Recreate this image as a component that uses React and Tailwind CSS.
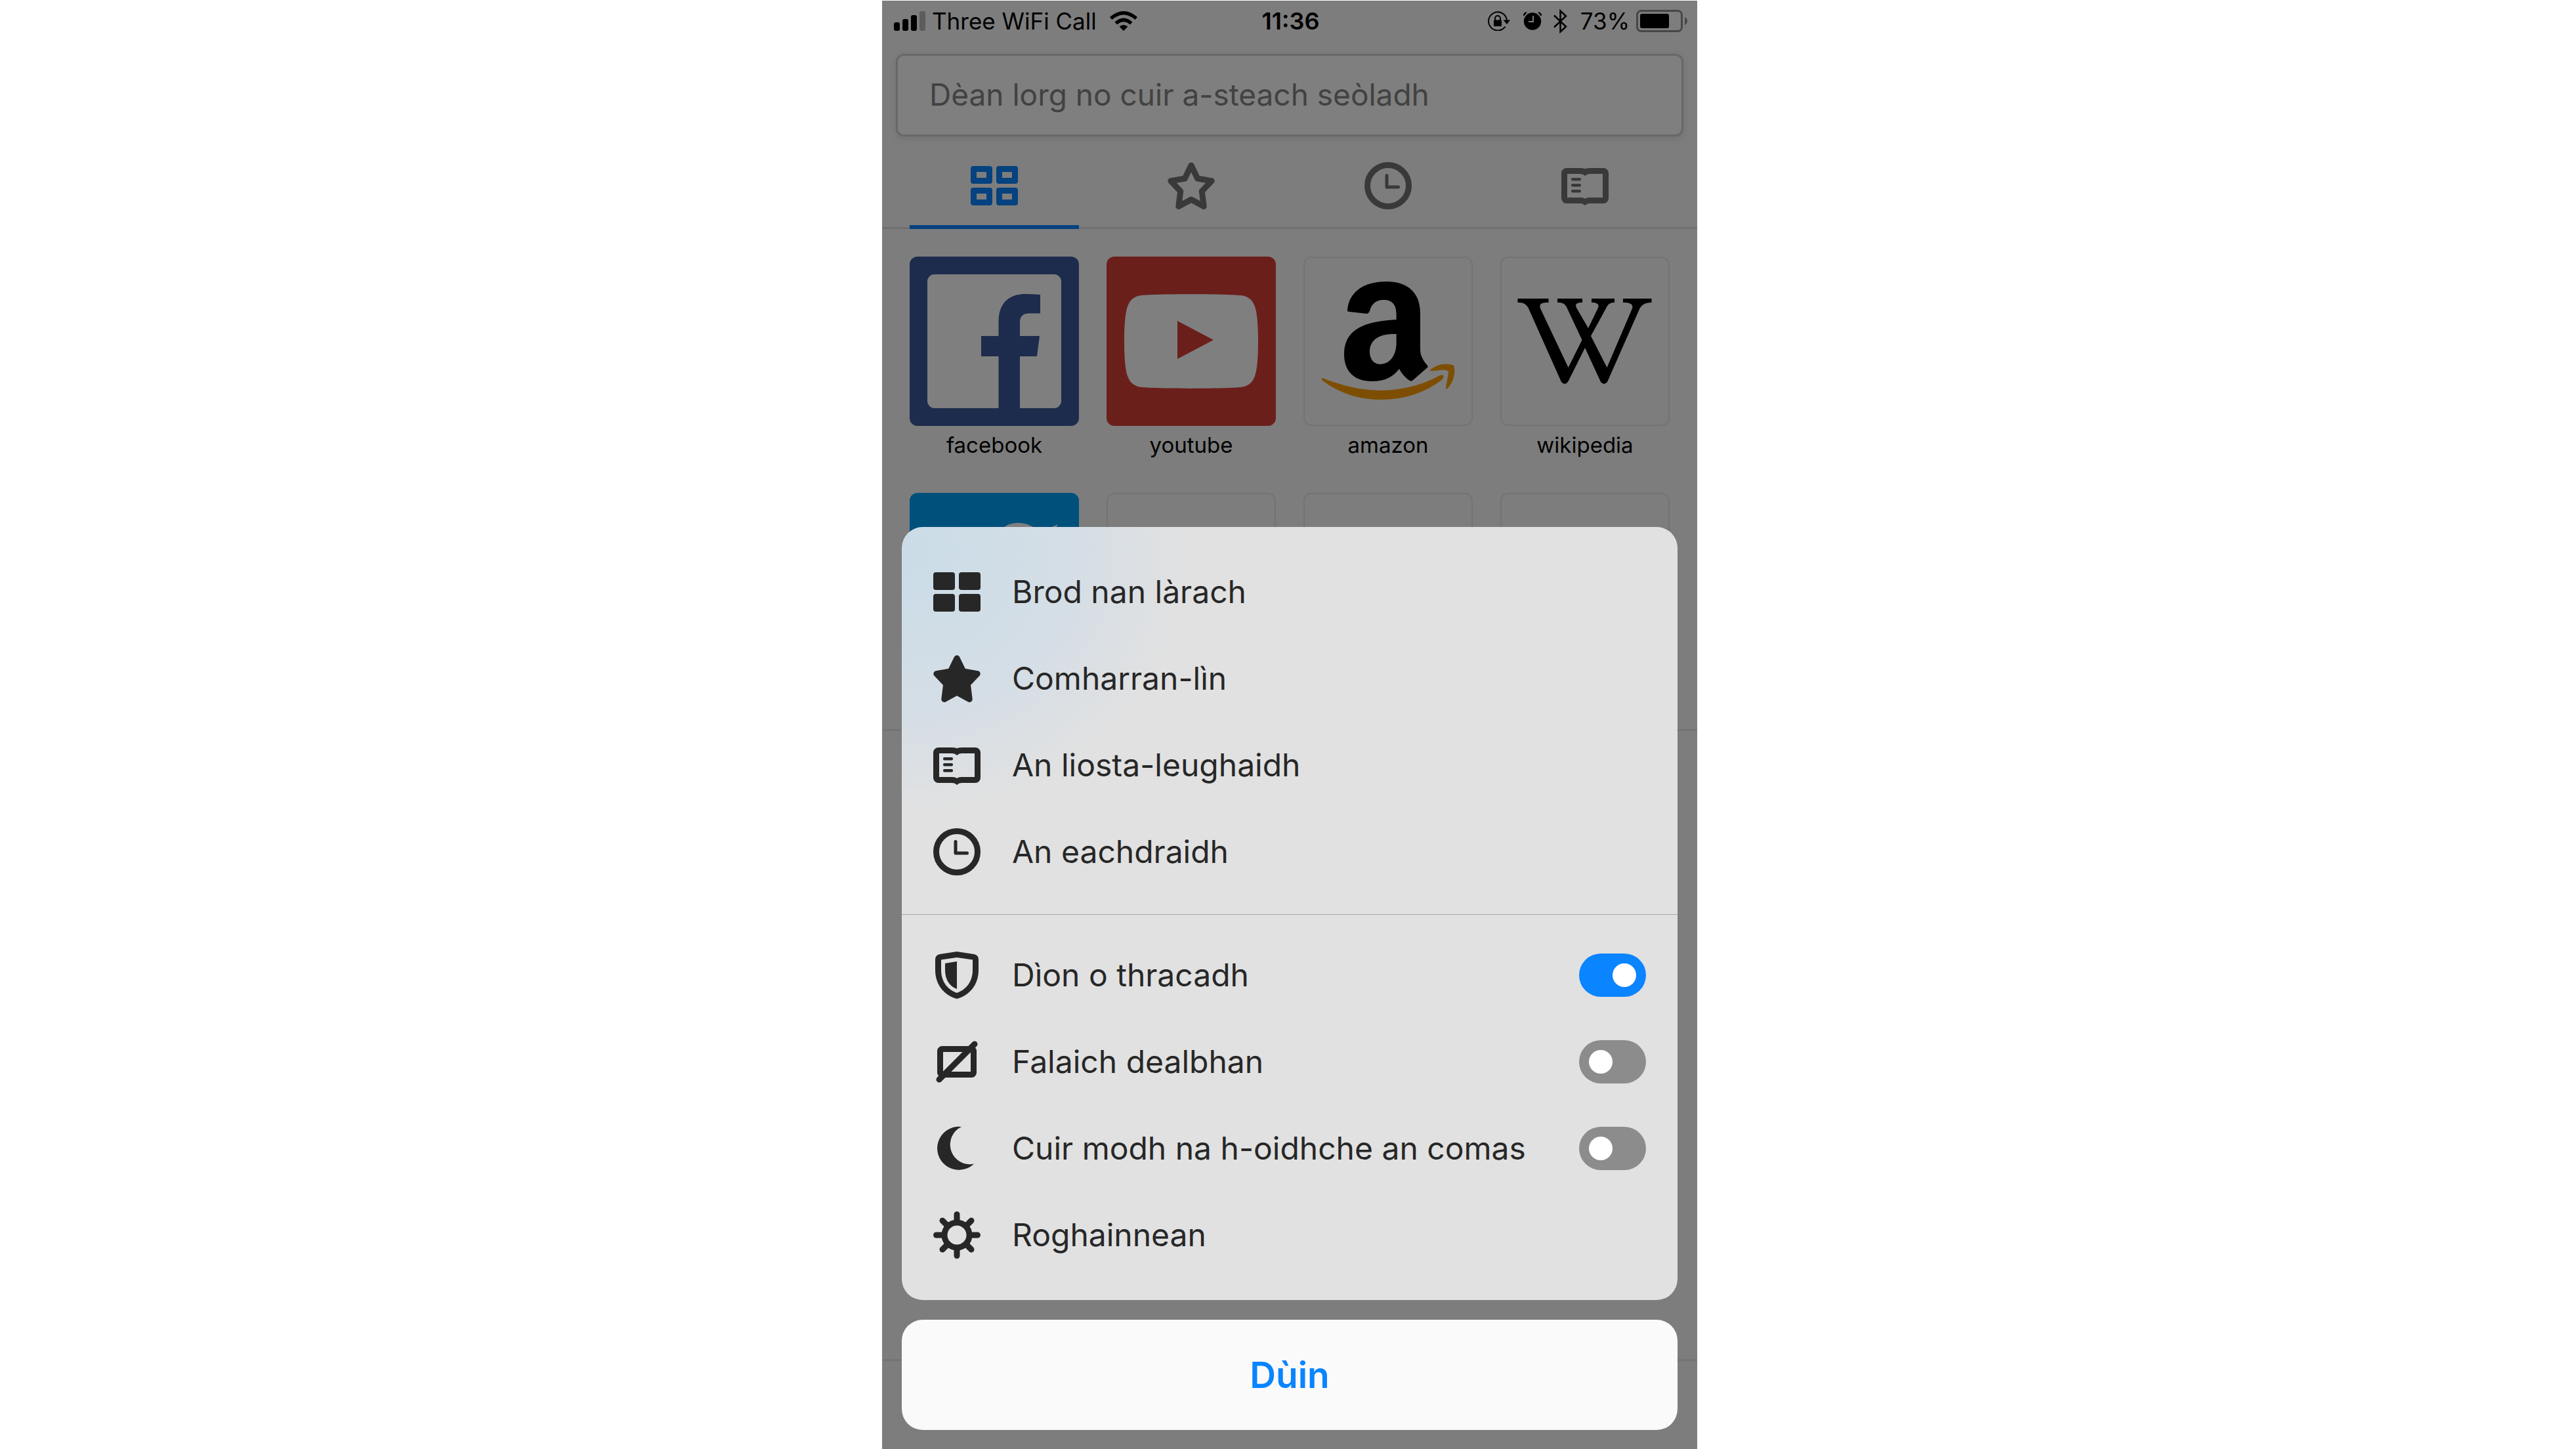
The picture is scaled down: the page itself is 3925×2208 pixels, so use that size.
import React from "react";

const GridOutline = () => (
  <svg viewBox="0 0 72 72" className="size-[72px]" fill="none" stroke="currentColor" aria-hidden="true">
    {[[0, 6], [39, 6], [0, 39], [39, 39]].map(([x, y]) => (
      <path
        key={`${x}-${y}`}
        fill="currentColor"
        stroke="none"
        fillRule="evenodd"
        transform={`translate(${x} ${y})`}
        d="M4 0H29a4 4 0 0 1 4 4V23a4 4 0 0 1-4 4H4a4 4 0 0 1-4-4V4a4 4 0 0 1 4-4ZM9 9V18H24V9Z"
      />
    ))}
  </svg>
);

const GridSolid = () => (
  <svg viewBox="0 0 72 72" className="size-[72px]" fill="currentColor" aria-hidden="true">
    <rect x="0" y="6" width="33" height="27" rx="4" />
    <rect x="39" y="6" width="33" height="27" rx="4" />
    <rect x="0" y="39" width="33" height="27" rx="4" />
    <rect x="39" y="39" width="33" height="27" rx="4" />
  </svg>
);

const STAR = "M36 5L45.7 25L67.2 28.7L52.3 44.3L55.2 67.5L36 57L16.8 67.5L19.7 44.3L4.8 28.7L26.3 25Z";

const Star = ({ solid }) => (
  <svg
    viewBox="0 0 72 72"
    className="size-[72px]"
    fill={solid ? "currentColor" : "none"}
    stroke="currentColor"
    strokeWidth="9"
    strokeLinejoin="round"
    aria-hidden="true"
  >
    <path d={STAR} />
  </svg>
);

const Clock = () => (
  <svg viewBox="0 0 72 72" className="size-[72px]" fill="none" stroke="currentColor" aria-hidden="true">
    <circle cx="36" cy="36" r="31.5" strokeWidth="9" />
    <path d="M34 20.5V38H51.5" strokeWidth="5" strokeLinecap="round" strokeLinejoin="round" />
  </svg>
);

const Book = () => (
  <svg viewBox="0 0 72 72" className="size-[72px]" fill="currentColor" aria-hidden="true">
    <g transform="translate(0 9)">
      <path
        fillRule="evenodd"
        d="M8 0H29Q34 0 36 1.500Q38 0 43 0H64A8 8 0 0 1 72 8V46A8 8 0 0 1 64 54H43Q39 54 36 57Q33 54 29 54H8A8 8 0 0 1 0 46V8A8 8 0 0 1 8 0ZM9 9V45H29Q34 45 36 47Q38 45 43 45H63V9H43Q39 9 36 12Q33 9 29 9Z"
      />
      <rect x="15" y="15" width="15" height="4.500" rx="2" />
      <rect x="15" y="24" width="15" height="4.500" rx="2" />
      <rect x="15" y="33" width="15" height="4.500" rx="2" />
    </g>
  </svg>
);

const Shield = () => (
  <svg viewBox="0 0 72 72" className="size-[72px]" fill="currentColor" aria-hidden="true">
    <path
      fillRule="evenodd"
      d="M36 0L62 4Q69 5.500 69 12V28C69 52 54 67 36 72C18 67 3 52 3 28V12Q3 5.500 10 4ZM36 9L12 12.500V28C12 46 22 58 36 63C50 58 60 46 60 28V12.500Z"
    />
    <path d="M36 15V57C25 53 18 43 18 28V18Z" />
  </svg>
);

const ImageOff = () => (
  <svg viewBox="0 0 72 72" className="size-[72px]" fill="none" stroke="currentColor" strokeWidth="9" aria-hidden="true">
    <rect x="10.500" y="16.500" width="51" height="39" rx="3" />
    <path d="M9 63L63 9" strokeLinecap="round" />
  </svg>
);

const Moon = () => (
  <svg viewBox="0 0 72 72" className="size-[72px]" fill="currentColor" aria-hidden="true">
    <path d="M43 3A33 33 0 1 0 62 59.500A30 30 0 0 1 43 3Z" />
  </svg>
);

const Gear = () => (
  <svg viewBox="0 0 72 72" className="size-[72px]" fill="none" stroke="currentColor" strokeWidth="9" strokeLinecap="round" aria-hidden="true">
    <circle cx="36" cy="36" r="19" />
    <path d="M36 4.500V16M36 56V67.500M4.500 36H16M56 36H67.500M14 14L21 21M51 51L58 58M14 58L21 51M51 21L58 14" />
  </svg>
);

const Signal = () => (
  <svg viewBox="0 0 48 30" className="h-[30px] w-12" aria-hidden="true">
    <rect x="0" y="17" width="9" height="13" rx="3" />
    <rect x="13" y="12" width="9" height="18" rx="3" />
    <rect x="26" y="6" width="9" height="24" rx="3" />
    <rect x="39" y="0" width="9" height="30" rx="3" fill="#b9b9b9" />
  </svg>
);

const Wifi = () => (
  <svg viewBox="0 0 42 30" className="h-[30px] w-[42px]" aria-hidden="true">
    <path d="M21 30L14.500 23.500Q21 18.500 27.500 23.500Z" />
    <path d="M7.500 16.500Q21 4.500 34.500 16.500L31 20.500Q21 12 11 20.500Z" />
    <path d="M0 9Q21 -9 42 9L38.500 13Q21 -2 3.500 13Z" />
  </svg>
);

const RotationLock = () => (
  <svg viewBox="0 0 34 30" className="h-[30px] w-[34px]" aria-hidden="true">
    <path d="M26.500 23.500A14 14 0 1 1 29 14" fill="none" stroke="#000" strokeWidth="2" />
    <path d="M23.500 13.500H34L29 20Z" />
    <rect x="9" y="13.500" width="12" height="9.500" rx="1" />
    <path d="M11 14V11a4 4 0 0 1 8 0V14" fill="none" stroke="#000" strokeWidth="2" />
  </svg>
);

const Alarm = () => (
  <svg viewBox="0 0 28 28" className="size-7" aria-hidden="true">
    <circle cx="14" cy="14.500" r="13.200" />
    <path d="M15 6V15H8" fill="none" stroke="#fafafa" strokeWidth="2" />
    <path d="M0 6Q0 0 6 0.500L1 6.500ZM28 6Q28 0 22 0.500L27 6.500Z" />
  </svg>
);

const Bluetooth = () => (
  <svg viewBox="0 0 21 37" className="h-[37px] w-[21px]" fill="none" stroke="#000" strokeWidth="2.500" aria-hidden="true">
    <path d="M1 9.500L19 26.500L10.500 34.500V2.500L19 10.500L1 27.500" />
  </svg>
);

const Battery = () => (
  <svg viewBox="0 0 78 34" className="h-[34px] w-[78px]" aria-hidden="true">
    <rect x="1.500" y="1.500" width="68" height="31" rx="6" fill="none" stroke="#8e8e8e" strokeWidth="3" />
    <rect x="6" y="6" width="44" height="22" rx="3" />
    <path d="M74 11Q78 13 78 17Q78 21 74 23Z" fill="#8e8e8e" />
  </svg>
);

const FacebookLogo = () => (
  <svg viewBox="0 0 258 258" className="size-full" aria-hidden="true">
    <rect width="258" height="258" fill="#3b5998" />
    <rect x="27" y="27" width="204" height="204" rx="11" fill="#fff" />
    <path
      fill="#3b5998"
      d="M135.500 231V152H109V121H135.500V98C135.500 72 151 57 176 57C188 57 195 58 199 58V86.500H183C171 86.500 168 92 168 101V121H198L194 152H168V231Z"
    />
  </svg>
);

const YoutubeLogo = () => (
  <svg viewBox="0 0 258 258" className="size-full" aria-hidden="true">
    <rect width="258" height="258" fill="#d73f37" />
    <path
      fill="#fff"
      d="M27 129C27 104 28.500 86 32 76C36 65 43 60 54 59C80 56.500 178 56.500 204 59C215 60 222 65 226 76C229.500 86 231 104 231 129C231 154 229.500 172 226 182C222 193 215 198 204 199C178 201.500 80 201.500 54 199C43 198 36 193 32 182C28.500 172 27 154 27 129Z"
    />
    <path fill="#d73f37" d="M108 98L163 127L108 156Z" />
  </svg>
);

const AmazonLogo = () => (
  <svg viewBox="0 0 258 258" className="size-full" aria-hidden="true">
    <path
      fillRule="evenodd"
      d="M67 82C69 54 92 38 126 38C160 38 178 56 178 86V142C178 152 184 160 189 166Q190 168 189 169L166 189Q164 190 162 189C156 185 150 179 146 171C137 183 125 190 104 190C78 190 62 175 62 149C62 116 84 99 141.600 96V88C141.600 74 136 66 122 66C109 66 103 74 101 83Q99 87 96 87L70 84Q67 84 67 82ZM141.600 118C115 117 101 127 101 145C101 156 107 164 117 164C132 164 141.600 150 141.600 132Z"
    />
    <path fill="#fa9d04" d="M29 185Q76 204 118 204Q168 203 208 181Q216 178 212 187Q172 218 118 218Q66 218 28 188Q27 185 29 185Z" />
    <path fill="#fa9d04" d="M192 174C203 163 220 162 229 166C233 178 227 195 218 202C215 202 221 184 221 175C216 170 200 175 192 174Z" />
  </svg>
);

const WikipediaLogo = () => (
  <svg viewBox="0 0 258 258" className="size-full" aria-hidden="true">
    <path d="M26.500 64H73.500V70C62 70 59 72 61 79L103.600 169L124.500 127L101 77C98 71 94 70 87 70V64H125V70C115 70 114 73 116 78L134 109L149 78C151 73 148 70 139 70V64H174V70C167 70 165 72 162 77L138 121L162.500 169L201 79C203 72 197 70 187 70V64H230.500V70C220 70 215 74 212 80L163 191Q158 197 153 191L129 139L103 191Q98 197 93 191L43 79C39 71 34 70 26.500 70Z" />
  </svg>
);

const TwitterLogo = () => (
  <svg viewBox="0 0 258 258" className="size-full" aria-hidden="true">
    <rect width="258" height="258" fill="#00a0f8" />
    <path
      fill="#fff"
      d="M27 194C90 234 205 205 209 95L229 72L208 77L226 48L198 60C182 42 150 40 136 60Q126 76 127 98C90 96 62 80 38 52C26 72 32 96 50 108L31 103C32 124 44 140 65 145L46 146C52 162 66 172 84 173C68 187 48 194 27 194Z"
    />
  </svg>
);

const tabs = [
  { name: "Brod nan làrach", icon: <GridOutline />, active: true },
  { name: "Comharran-lìn", icon: <Star /> },
  { name: "An eachdraidh", icon: <Clock /> },
  { name: "An liosta-leughaidh", icon: <Book /> },
];

const sites = [
  { name: "facebook", logo: <FacebookLogo /> },
  { name: "youtube", logo: <YoutubeLogo /> },
  { name: "amazon", logo: <AmazonLogo />, plain: true },
  { name: "wikipedia", logo: <WikipediaLogo />, plain: true },
  { logo: <TwitterLogo /> },
  { plain: true },
  { plain: true },
  { plain: true },
];

const links = [
  { label: "Brod nan làrach", icon: <GridSolid /> },
  { label: "Comharran-lìn", icon: <Star solid /> },
  { label: "An liosta-leughaidh", icon: <Book /> },
  { label: "An eachdraidh", icon: <Clock /> },
];

const switches = [
  { id: "tracking", label: "Dìon o thracadh", icon: <Shield />, on: true },
  { id: "images", label: "Falaich dealbhan", icon: <ImageOff /> },
  { id: "night", label: "Cuir modh na h-oidhche an comas", icon: <Moon /> },
];

function StatusBar() {
  return (
    <div className="grid h-[62px] grid-cols-[1fr_auto_1fr] items-center pr-[15px] pl-[18px] text-[35px] leading-[60px]">
      <div className="flex items-center">
        <Signal />
        <span className="ml-[10px]">Three WiFi Call</span>
        <span className="ml-5"><Wifi /></span>
      </div>
      <span className="text-[36px] font-semibold">11:36</span>
      <div className="flex items-center justify-end">
        <RotationLock />
        <span className="ml-5"><Alarm /></span>
        <span className="ml-[18px]"><Bluetooth /></span>
        <span className="ml-5">73%</span>
        <span className="ml-[10px]"><Battery /></span>
      </div>
    </div>
  );
}

function Row({ icon, label }) {
  return (
    <button type="button" className="flex h-[132px] w-full items-center gap-12 text-left">
      {icon}
      <span>{label}</span>
    </button>
  );
}

function SwitchRow({ id, icon, label, on }) {
  return (
    <div className="flex h-[132px] items-center gap-12">
      {icon}
      <label htmlFor={id} className="flex-1 whitespace-nowrap">{label}</label>
      <input
        id={id}
        type="checkbox"
        role="switch"
        defaultChecked={on}
        className="h-[66px] w-[102px] shrink-0 appearance-none rounded-full bg-[#8c8c8c] p-[15px] before:block before:size-9 before:rounded-full before:bg-white before:content-[''] checked:bg-[#0a84ff] checked:before:translate-x-9"
      />
    </div>
  );
}

export default function App() {
  return (
    <div className="min-h-screen bg-white pt-px pl-[5px] font-['Inter',sans-serif]">
      <div className="relative mx-auto flex h-[calc(100vh-1px)] w-full max-w-[1242px] flex-col overflow-hidden bg-[#fafafa] text-black">
        <StatusBar />
        <div className="px-[21px] pt-[19px]">
          <input
            type="text"
            aria-label="Dèan lorg no cuir a-steach seòladh"
            placeholder="Dèan lorg no cuir a-steach seòladh"
            className="block h-[126px] w-full rounded-xl border-3 border-[#d0d0d0] bg-white px-12 pb-[2px] text-[46px] shadow-[0_3px_12px_rgba(0,0,0,0.1)] placeholder:text-[#848484]"
          />
        </div>
        <nav className="grid grid-cols-4 gap-x-[42px] border-b-3 border-[#e0e0e0] px-[42px]">
          {tabs.map((t) => (
            <button
              key={t.name}
              type="button"
              aria-label={t.name}
              className={
                t.active
                  ? "-mb-[3px] flex h-[141px] items-center justify-center border-b-6 border-[#0a84ff] pt-[15px] text-[#0a84ff]"
                  : "-mb-[3px] flex h-[141px] items-center justify-center border-b-6 border-transparent pt-[15px] text-[#727272]"
              }
            >
              {t.icon}
            </button>
          ))}
        </nav>
        <main className="grid grid-cols-4 gap-x-[42px] gap-y-[55px] border-b-3 border-[#e8e8e8] px-[42px] pt-[42px] pb-[55px]">
          {sites.map((s, i) => (
            <a key={i} href="#" className="block text-center text-[33px] leading-9">
              <span
                className={
                  s.plain
                    ? "block aspect-square overflow-hidden rounded-xl outline-2 -outline-offset-2 outline-[#e6e6e6]"
                    : "block aspect-square overflow-hidden rounded-xl"
                }
              >
                {s.logo}
              </span>
              <span className="mt-[11px] block h-9">{s.name}</span>
            </a>
          ))}
        </main>
        <footer className="mt-auto h-[137px] shrink-0 border-t-3 border-[#e8e8e8]" />

        <div className="absolute inset-0 flex flex-col justify-end gap-[30px] bg-black/50 px-[30px] pb-[29px]">
          <section className="overflow-hidden rounded-[32px] bg-[#e1e1e1] bg-[radial-gradient(ellipse_440px_400px_at_0px_40px,#cadce7_0%,#d5dee6_60%,#e1e1e1_100%)] text-[48px] leading-[60px] text-[#272727]">
            <div className="border-b border-[#a8a8a8] px-12 pt-[33px] pb-[29px]">
              {links.map((l) => (
                <Row key={l.label} {...l} />
              ))}
            </div>
            <div className="px-12 pt-[26px] pb-[33px]">
              {switches.map((s) => (
                <SwitchRow key={s.id} {...s} />
              ))}
              <Row icon={<Gear />} label="Roghainnean" />
            </div>
          </section>
          <button type="button" className="h-[168px] rounded-[32px] bg-[#fafafa] text-[55px] font-semibold text-[#0a84ff]">
            Dùin
          </button>
        </div>
      </div>
    </div>
  );
}
